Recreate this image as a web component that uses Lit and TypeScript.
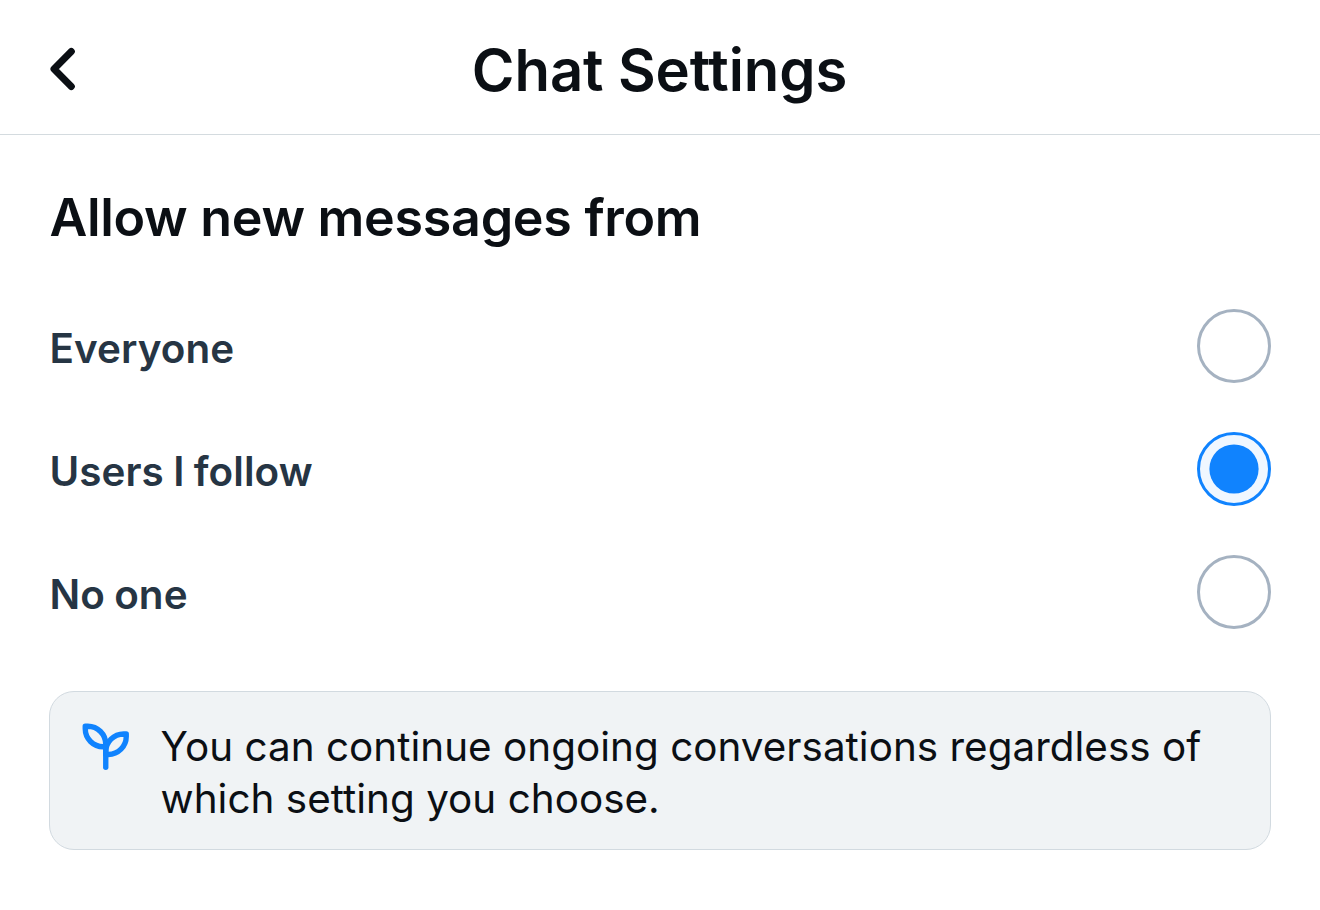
import { LitElement, html, css } from 'lit';
import { customElement, property, state } from 'lit/decorators.js';
import { classMap } from 'lit/directives/class-map.js';

@customElement('radio-row')
export class RadioRow extends LitElement {
  @property({ type: String }) label = '';
  @property({ type: Boolean }) checked = false;

  static styles = css`
    :host {
      display: flex;
      align-items: center;
      justify-content: space-between;
      height: 74px;
      cursor: pointer;
    }
    .label {
      color: #263544;
      font-size: 40.4px;
      font-weight: 600;
      line-height: 53px;
      padding-top: 4px;
      letter-spacing: 0.1px;
      word-spacing: -1px;
    }
    .ring {
      box-sizing: border-box;
      width: 74px;
      height: 74px;
      border: 3px solid #a5b2c1;
      border-radius: 50%;
    }
    .ring.checked {
      border-color: #1083fe;
      background: #f0f7ff;
    }
    .dot {
      display: block;
    }
  `;

  render() {
    return html`
      <span class="label">${this.label}</span>
      <span class=${classMap({ ring: true, checked: this.checked })}>
        ${this.checked
          ? html`
              <svg class="dot" width="68" height="68" viewBox="0 0 68 68">
                <circle cx="34" cy="34" r="24.6" fill="#1083fe" />
              </svg>
            `
          : ''}
      </span>
    `;
  }
}

@customElement('app-root')
export class AppRoot extends LitElement {
  @state() selected = 'following';

  options = [
    { value: 'all', label: 'Everyone' },
    { value: 'following', label: 'Users I follow' },
    { value: 'none', label: 'No one' },
  ];

  static styles = css`
    :host {
      display: block;
      min-height: 910px;
      background: #fff;
      color: #0b0f14;
      font-family: Inter, sans-serif;
      font-optical-sizing: none;
    }
    .header {
      box-sizing: border-box;
      display: grid;
      grid-template-columns: 61px 1fr 62px;
      align-items: center;
      height: 135px;
      padding: 5px 49px 0;
      border-bottom: 1px solid #d4dbdf;
    }
    .back {
      display: flex;
      padding: 0 0 2px;
      border: 0;
      background: none;
    }
    .title {
      margin: 0;
      font-size: 58px;
      font-weight: 600;
      line-height: 76px;
      letter-spacing: -0.1px;
      text-align: center;
    }
    .content {
      padding: 49px 49px 0;
    }
    .heading {
      margin: 0 0 58px;
      padding-left: 0.4px;
      font-size: 52px;
      font-weight: 600;
      line-height: 67px;
      letter-spacing: -0.3px;
    }
    .options {
      display: flex;
      flex-direction: column;
      gap: 49px;
      padding-left: 0.4px;
    }
    .note {
      box-sizing: border-box;
      display: flex;
      gap: 24.5px;
      height: 159px;
      margin-top: 62px;
      padding: 24px 24px 24px 24.6px;
      border: 1px solid #d2dae0;
      border-radius: 25px;
      background: #f0f3f5;
    }
    .note svg {
      flex: none;
    }
    .text {
      margin: 5px 0 0;
      font-size: 40.4px;
      line-height: 52px;
      letter-spacing: 0.03px;
    }
  `;

  render() {
    return html`
      <header class="header">
        <button class="back" aria-label="Back">
          <svg width="28" height="44" viewBox="0 0 28 44" fill="none">
            <path
              d="M22.3 4.5 5 22l17.3 17.5"
              stroke="#0b0f14"
              stroke-width="7"
              stroke-linecap="round"
              stroke-linejoin="round"
            />
          </svg>
        </button>
        <h1 class="title">Chat Settings</h1>
      </header>
      <main class="content">
        <h2 class="heading">Allow new messages from</h2>
        <div class="options">
          ${this.options.map(
            (o) => html`
              <radio-row
                .label=${o.label}
                .checked=${o.value === this.selected}
                @click=${() => (this.selected = o.value)}
              ></radio-row>
            `
          )}
        </div>
        <div class="note">
          <svg
            width="61.5"
            height="61.5"
            viewBox="0 0 24 24"
            fill="none"
            stroke="#1083fe"
            stroke-width="2.1"
            stroke-linecap="round"
            stroke-linejoin="round"
          >
            <path d="M4 4h1a7 7 0 0 1 7 7v1h-1a7 7 0 0 1-7-7z" />
            <path d="M20 7h-1a7 7 0 0 0-7 7v1h1a7 7 0 0 0 7-7z" />
            <path d="M12 12v8" />
          </svg>
          <p class="text">
            You can continue ongoing conversations regardless of which setting
            you choose.
          </p>
        </div>
      </main>
    `;
  }
}
